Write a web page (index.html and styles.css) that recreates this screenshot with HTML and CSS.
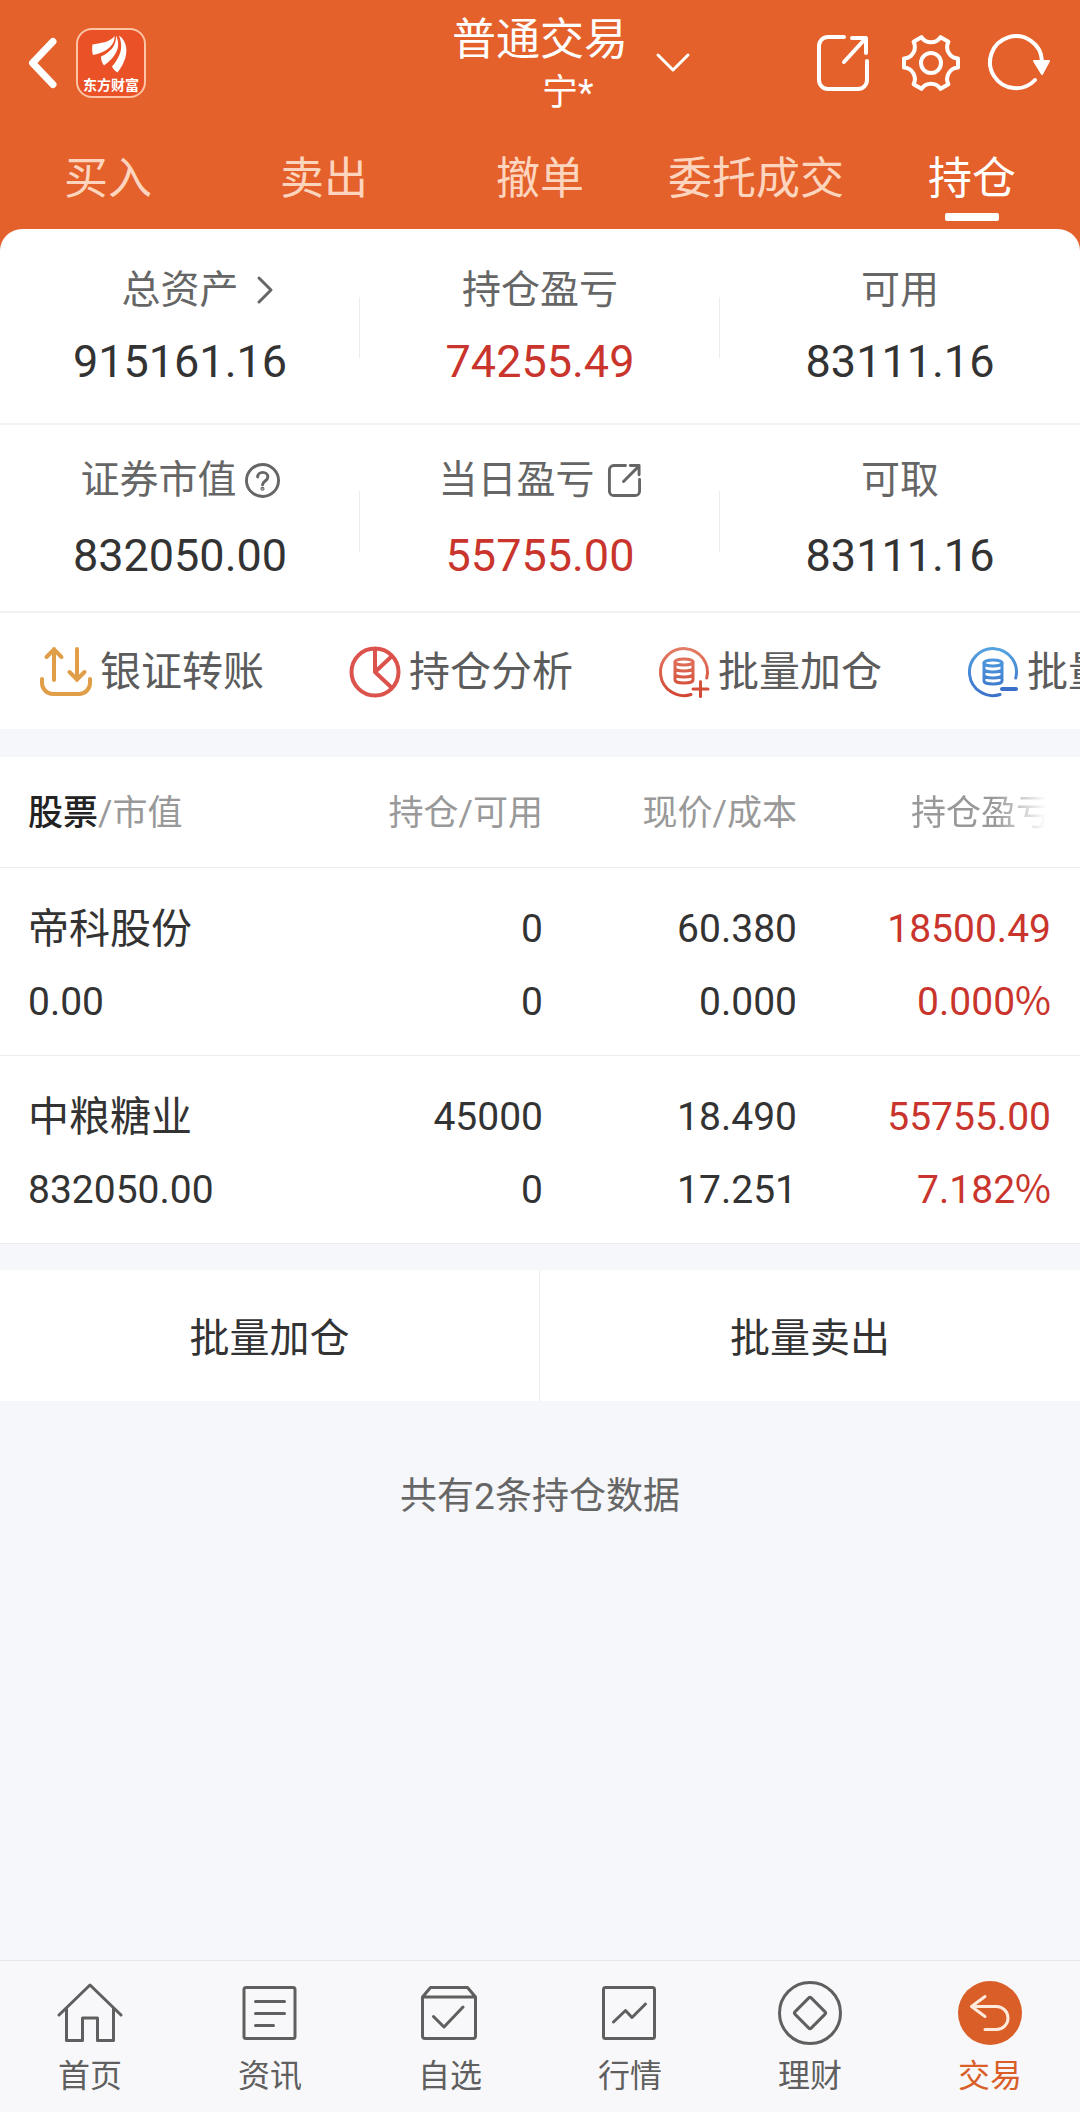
FILE: index.html
```html
<!DOCTYPE html>
<html lang="zh-CN">
<head>
<meta charset="utf-8">
<meta name="viewport" content="width=device-width, initial-scale=1">
<title>普通交易 - 持仓</title>
<link rel="stylesheet" href="styles.css">
</head>
<body>
<div class="app">
  <header class="header">
    <div class="topbar">
      <div class="topbar-start">
        <button class="icon-button" type="button" aria-label="返回">
          <svg class="icon-back" viewBox="0 0 28 50" aria-hidden="true"><path d="M24 3.500 3.500 25 24 46.500"/></svg>
        </button>
        <svg class="logo" viewBox="0 0 70 70" role="img" aria-label="东方财富">
          <rect class="logo-frame" x="1" y="1" width="68" height="68" rx="15"/>
          <path class="logo-mark" d="M16.500 16.500C24 15 34 14.500 38.500 8c1 8-7 16.500-21.500 19-1-3-1.200-7-.5-10.500zM40 7.500c6 12-1 22-12 30-2-2.500-3-5.500-3-9C34 24.500 40.500 18 40 7.500zM43 7.500c11 8 9 24-1.500 37-2.500-1.500-4.500-3.500-5.500-6C45 28 47.500 19 43 7.500z"/>
          <text class="logo-text" x="35" y="62">东方财富</text>
        </svg>
      </div>
      <button class="account" type="button">
        <span class="account-text">
          <span class="account-type">普通交易</span>
          <span class="account-name">宁*</span>
        </span>
        <svg class="icon-down" viewBox="0 0 34 20" aria-hidden="true"><path d="M2 2l15 15L32 2"/></svg>
      </button>
      <div class="topbar-end">
        <button class="icon-button" type="button" aria-label="分享">
          <svg class="icon-tool" viewBox="0 0 64 64" aria-hidden="true"><path d="M33 6H17a9 9 0 0 0-9 9v34a9 9 0 0 0 9 9h30a9 9 0 0 0 9-9V30M41 7h14v15M54 8 33 31"/></svg>
        </button>
        <button class="icon-button" type="button" aria-label="设置">
          <svg class="icon-tool" viewBox="-32 -32 64 64" aria-hidden="true"><path d="M27-4.500V4.500A11.500 11.500 0 0 0 17.400 21.200L9.600 25.800A11.500 11.500 0 0 0-9.600 25.800L-17.400 21.200A11.500 11.500 0 0 0-27 4.500V-4.500A11.500 11.500 0 0 0-17.400-21.200L-9.600-25.800A11.500 11.500 0 0 0 9.600-25.800L17.400-21.200A11.500 11.500 0 0 0 27-4.500z"/><circle r="10"/></svg>
        </button>
        <button class="icon-button" type="button" aria-label="刷新">
          <svg class="icon-tool" viewBox="0 0 64 64" aria-hidden="true"><path d="M48 49A26 26 0 1 1 55 30"/><path class="solid arrowhead" d="M47 30h15l-7 13z"/></svg>
        </button>
      </div>
    </div>
    <nav class="tabs" aria-label="交易">
      <a class="tab" href="#buy">买入</a>
      <a class="tab" href="#sell">卖出</a>
      <a class="tab" href="#cancel">撤单</a>
      <a class="tab" href="#orders">委托成交</a>
      <a class="tab tab-active" href="#positions" aria-current="page">持仓</a>
    </nav>
  </header>

  <main class="main">
    <section class="summary" aria-label="资产">
      <dl class="metrics">
        <div class="metric">
          <dt><a class="metric-link" href="#assets">总资产<svg class="icon-next" viewBox="0 0 16 28" aria-hidden="true"><path d="M2 2l12 12L2 26"/></svg></a></dt>
          <dd>915161.16</dd>
        </div>
        <div class="metric">
          <dt>持仓盈亏</dt>
          <dd class="rise">74255.49</dd>
        </div>
        <div class="metric">
          <dt>可用</dt>
          <dd>83111.16</dd>
        </div>
      </dl>
      <dl class="metrics metrics-market">
        <div class="metric">
          <dt class="dt-help">证券市值<button class="icon-button" type="button" aria-label="说明"><svg class="icon-label" viewBox="0 0 36 36" aria-hidden="true"><circle cx="18" cy="18" r="16.500"/><path d="M13 14.500c0-6.500 10.500-6.500 10.500 0 0 4-5.500 4-5.500 8"/><circle class="solid" cx="18" cy="26.500" r=".6"/></svg></button></dt>
          <dd>832050.00</dd>
        </div>
        <div class="metric">
          <dt class="dt-share">当日盈亏<button class="icon-button" type="button" aria-label="分享当日盈亏"><svg class="icon-label" viewBox="0 0 36 36" aria-hidden="true"><path d="M19 2.500H7A4.500 4.500 0 0 0 2.500 7v22A4.500 4.500 0 0 0 7 33.500h22a4.500 4.500 0 0 0 4.500-4.500V17M24 2.500h9V12M32.500 3.500 17 19"/></svg></button></dt>
          <dd class="rise">55755.00</dd>
        </div>
        <div class="metric">
          <dt>可取</dt>
          <dd>83111.16</dd>
        </div>
      </dl>
    </section>

    <nav class="actions" aria-label="快捷功能">
      <a class="action" href="#transfer">
        <svg class="icon-action amber" viewBox="0 0 52 52" aria-hidden="true"><path d="M2 33v4a11 11 0 0 0 11 11h26a11 11 0 0 0 11-11v-4M14 34V3M6.500 11 14 3.500l7.500 7.500M37 3v31M29.500 26l7.500 7.500 7.500-7.500"/></svg>
        银证转账
      </a>
      <a class="action" href="#analysis">
        <svg class="icon-action red" viewBox="0 0 52 52" aria-hidden="true"><circle cx="26" cy="26" r="23.500"/><path d="M26 3v23L43 42M26 26l17-16"/></svg>
        持仓分析
      </a>
      <a class="action" href="#batch-add">
        <svg class="icon-action" viewBox="0 0 52 52" aria-hidden="true">
          <defs><linearGradient id="coral" gradientUnits="userSpaceOnUse" x1="0" y1="0" x2="0" y2="52"><stop offset="0" stop-color="#e58068"/><stop offset="1" stop-color="#d0432f"/></linearGradient></defs>
          <g stroke="url(#coral)"><path d="M48.700 32A23.500 23.500 0 1 0 33 48.500"/><ellipse cx="26" cy="16" rx="9" ry="3"/><path d="M17 16v18c0 4 18 4 18 0V16M17 22c0 4 18 4 18 0M17 28c0 4 18 4 18 0M35 43h15M42.500 35.500v15"/></g>
        </svg>
        批量加仓
      </a>
      <a class="action" href="#batch-sell">
        <svg class="icon-action" viewBox="0 0 52 52" aria-hidden="true">
          <defs><linearGradient id="azure" gradientUnits="userSpaceOnUse" x1="0" y1="0" x2="0" y2="52"><stop offset="0" stop-color="#55a5e2"/><stop offset="1" stop-color="#3b6fc9"/></linearGradient></defs>
          <g stroke="url(#azure)"><path d="M48.700 32A23.500 23.500 0 1 0 33 48.500"/><ellipse cx="26" cy="17" rx="9" ry="3"/><path d="M17 17v18c0 4 18 4 18 0V17M17 23c0 4 18 4 18 0M17 29c0 4 18 4 18 0"/></g>
          <path class="minus" d="M35 43h14"/>
        </svg>
        批量卖出
      </a>
    </nav>

    <table class="holdings">
      <colgroup><col><col class="col-number"><col class="col-number"><col class="col-last"></colgroup>
      <thead>
        <tr>
          <th scope="col"><strong>股票</strong>/市值</th>
          <th scope="col">持仓/可用</th>
          <th scope="col">现价/成本</th>
          <th scope="col"><span class="fade">持仓盈亏</span></th>
        </tr>
      </thead>
      <tbody>
        <tr>
          <td><span class="name">帝科股份</span><span>0.00</span></td>
          <td><span>0</span><span>0</span></td>
          <td><span>60.380</span><span>0.000</span></td>
          <td class="rise"><span>18500.49</span><span>0.000<i class="unit">%</i></span></td>
        </tr>
        <tr>
          <td><span class="name">中粮糖业</span><span>832050.00</span></td>
          <td><span>45000</span><span>0</span></td>
          <td><span>18.490</span><span>17.251</span></td>
          <td class="rise"><span>55755.00</span><span>7.182<i class="unit">%</i></span></td>
        </tr>
      </tbody>
    </table>

    <div class="batch">
      <button class="batch-button" type="button">批量加仓</button>
      <button class="batch-button" type="button">批量卖出</button>
    </div>

    <p class="count">共有2条持仓数据</p>
  </main>

  <nav class="bottom-nav" aria-label="主导航">
    <a class="nav-item" href="#home">
      <svg class="icon-nav" viewBox="0 0 64 64" aria-hidden="true"><path d="M1 34 32 4l31 30M8.500 27v32.500h16V37h15v22.500h16V27"/></svg>
      首页
    </a>
    <a class="nav-item" href="#news">
      <svg class="icon-nav" viewBox="0 0 64 64" aria-hidden="true"><rect x="6" y="6.500" width="51" height="51" rx="2"/><path d="M17.500 20.500h29M17.500 32.500h29M17.500 44.500h18"/></svg>
      资讯
    </a>
    <a class="nav-item" href="#watchlist">
      <svg class="icon-nav" viewBox="0 0 64 64" aria-hidden="true"><path d="M4.500 16v39a2.500 2.500 0 0 0 2.500 2.500h48a2.500 2.500 0 0 0 2.500-2.500V16l-8-9.500h-37zM4.500 16h53M15.500 35.500 26 46l19-20"/></svg>
      自选
    </a>
    <a class="nav-item" href="#market">
      <svg class="icon-nav" viewBox="0 0 64 64" aria-hidden="true"><rect x="5.500" y="6.500" width="51" height="51" rx="2"/><path d="M15.500 41 27.500 29.500 34 36.500 47.500 23"/></svg>
      行情
    </a>
    <a class="nav-item" href="#wealth">
      <svg class="icon-nav" viewBox="0 0 64 64" aria-hidden="true"><circle cx="32" cy="32" r="30.500"/><rect x="-11.500" y="-11.500" width="23" height="23" rx="2" transform="translate(32 32) rotate(45)"/></svg>
      理财
    </a>
    <a class="nav-item nav-active" href="#trade" aria-current="page">
      <svg class="icon-nav" viewBox="0 0 64 64" aria-hidden="true"><circle class="disc" cx="32" cy="32" r="32"/><path class="arrow" d="M27 15.500 13.500 25.500 27 35.500M14 25.500h24.500a11.500 11.500 0 0 1 0 23H27"/></svg>
      交易
    </a>
  </nav>
</div>
</body>
</html>
```
FILE: styles.css
```css
* {
  box-sizing: border-box;
}

body {
  margin: 0;
  background: #f6f7fa;
  color: #333;
  font-family: Roboto, "Noto Sans CJK SC", sans-serif;
}

a {
  color: inherit;
  text-decoration: none;
}

button {
  padding: 0;
  border: 0;
  background: none;
  color: inherit;
  font: inherit;
}

dl,
dd,
p {
  margin: 0;
}

svg {
  display: block;
  flex: none;
  overflow: visible;
  fill: none;
  stroke: currentColor;
  stroke-linecap: round;
  stroke-linejoin: round;
}

.solid {
  fill: currentColor;
}

.icon-button {
  display: block;
}

.app {
  display: flex;
  flex-direction: column;
  min-height: 100vh;
}

/* Header */

.header {
  padding-bottom: 22px;
  background: #e4612b;
  color: #fff;
}

.topbar {
  display: grid;
  grid-template-columns: 1fr auto 1fr;
  align-items: center;
  height: 125px;
  padding: 0 29px;
}

.topbar-start {
  display: flex;
  align-items: center;
  gap: 19px;
}

.topbar-end {
  display: flex;
  justify-content: flex-end;
  gap: 24px;
}

.icon-back {
  width: 28px;
  height: 50px;
  stroke-width: 7;
}

.logo {
  width: 70px;
  height: 70px;
}

.logo-frame {
  fill: #ea5126;
  stroke: #fcc3a4;
  stroke-width: 2;
}

.logo-mark {
  fill: #fff;
  stroke: none;
}

.logo-text {
  fill: #fff;
  stroke: none;
  font-size: 14px;
  font-weight: 700;
  text-anchor: middle;
}

.account {
  display: grid;
  grid-template-columns: 34px auto 34px;
  align-items: center;
  gap: 28px;
  text-align: left;
}

.account-text {
  display: flex;
  grid-column: 2;
  flex-direction: column;
  padding-top: 2px;
}

.account-type {
  font-size: 44px;
  line-height: 58px;
}

.account-name {
  padding-left: 90px;
  font-size: 36px;
  line-height: 48px;
}

.icon-down {
  width: 34px;
  height: 20px;
  stroke-width: 3;
}

.icon-tool {
  width: 64px;
  height: 64px;
  stroke-width: 4;
}

.arrowhead {
  stroke-width: 2;
}

.tabs {
  display: grid;
  grid-template-columns: repeat(5, 1fr);
}

.tab {
  display: flex;
  flex-direction: column;
  align-items: center;
  height: 104px;
  padding-top: 24px;
  color: #fdd5bf;
  font-size: 44px;
  line-height: 60px;
}

.tab-active {
  color: #fff;
}

.tab-active::after {
  width: 54px;
  height: 8px;
  margin-top: 4px;
  border-radius: 2px;
  background: #fff;
  content: "";
}

/* Asset summary */

.summary {
  position: relative;
  margin-top: -22px;
  border-radius: 22px 22px 0 0;
  background: #fff;
}

.metrics {
  display: grid;
  grid-template-columns: repeat(3, 1fr);
  padding: 34px 0;
  border-bottom: 2px solid #f2f2f3;
}

.metrics-market {
  padding: 28px 0;
}

.metric {
  display: grid;
  justify-items: center;
  gap: 18px;
  background: linear-gradient(#ececec, #ececec) no-repeat right 34px / 1px 61px;
}

.metrics-market .metric {
  gap: 22px;
  background-position-y: 38px;
}

.metric:last-child {
  background: none;
}

.metric dt,
.metric-link {
  display: flex;
  align-items: center;
  color: #666;
  font-size: 39px;
  line-height: 54px;
}

.metric .dt-help {
  gap: 8px;
}

.metric .dt-share {
  gap: 12px;
}

.metric-link {
  gap: 18px;
  padding-left: 34px;
}

.metric dd {
  font-size: 45px;
  line-height: 54px;
}

.icon-next {
  width: 16px;
  height: 28px;
  stroke-width: 3;
}

.icon-label {
  width: 35px;
  height: 35px;
  stroke-width: 3;
}

.metric .rise,
.rise {
  color: #c9352c;
}

/* Shortcuts */

.actions {
  display: flex;
  gap: 85px;
  overflow: hidden;
  padding: 32px 0 30px 40px;
  background: #fff;
}

.action {
  display: flex;
  flex: none;
  align-items: center;
  gap: 8px;
  color: #5c5c5c;
  font-size: 41px;
  line-height: 54px;
}

.icon-action {
  width: 52px;
  height: 52px;
  stroke-width: 3;
}

.amber {
  color: #e09e48;
  stroke-width: 4;
}

.red {
  color: #dc524c;
  stroke-width: 4;
}

.minus {
  stroke: #3b6fc9;
  stroke-width: 4;
}

/* Holdings */

.holdings {
  width: 100%;
  margin-top: 28px;
  border-collapse: collapse;
  table-layout: fixed;
  background: #fff;
}

.col-number {
  width: 254px;
}

.col-last {
  width: 283px;
}

.holdings tr {
  border-bottom: 1px solid #ececec;
}

.holdings th,
.holdings td {
  padding: 0;
  text-align: right;
}

.holdings th {
  height: 110px;
  padding-top: 4px;
  color: #999;
  font-size: 35px;
  font-weight: 400;
  line-height: 50px;
}

.holdings th strong {
  color: #222;
  font-weight: 500;
}

.holdings tr > :first-child {
  padding-left: 28px;
  text-align: left;
}

.holdings tr > :last-child {
  padding-right: 29px;
}

.holdings td {
  height: 188px;
  padding-top: 10px;
  font-size: 39px;
}

.holdings td span {
  display: block;
  line-height: 73px;
}

.holdings .name {
  font-size: 41px;
}

.unit {
  font-family: "Noto Sans CJK SC", sans-serif;
  font-style: normal;
  line-height: 1;
}

.fade {
  mask-image: linear-gradient(to right, #000 60%, transparent 97%);
}

/* Batch operations */

.batch {
  display: grid;
  grid-template-columns: 1fr 1fr;
  margin-top: 26px;
  background: #fff;
}

.batch-button {
  height: 131px;
  font-size: 40px;
}

.batch-button:first-child {
  border-right: 1px solid #ececec;
}

.count {
  padding: 69px 0;
  color: #666;
  font-size: 37px;
  line-height: 54px;
  text-align: center;
}

/* Bottom navigation */

.bottom-nav {
  display: grid;
  grid-template-columns: repeat(6, 1fr);
  margin-top: auto;
  padding: 20px 0 12px;
  border-top: 1px solid #e6e7ea;
  background: #f8f8fa;
}

.nav-item {
  display: flex;
  flex-direction: column;
  align-items: center;
  gap: 7px;
  color: #5f5f5f;
  font-size: 32px;
  line-height: 48px;
}

.icon-nav {
  width: 64px;
  height: 64px;
  stroke-width: 3;
}

.nav-active {
  color: #d95e27;
}

.disc {
  fill: #d95e27;
  stroke: none;
}

.arrow {
  stroke: #ffeadb;
}
```
